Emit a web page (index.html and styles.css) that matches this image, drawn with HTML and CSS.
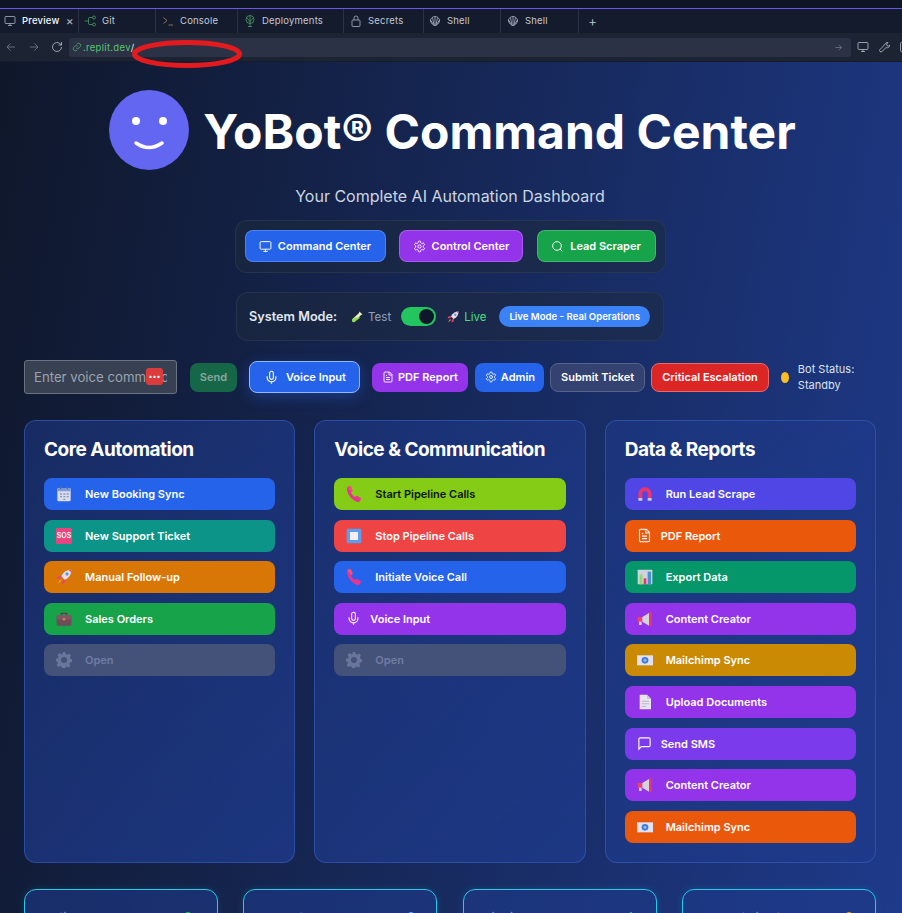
FILE: index.html
```html
<!DOCTYPE html>
<html lang="en">
<head>
    <meta charset="UTF-8">
    <meta name="viewport" content="width=device-width, initial-scale=1.0">
    <title>YoBot Command Center</title>
    <link rel="stylesheet" href="styles.css">
</head>
<body>
    <svg class="defs" width="0" height="0">
        <symbol id="i-monitor" viewBox="0 0 24 24"><rect x="2" y="3" width="20" height="14" rx="2"/><path d="M8 21h8M12 17v4"/></symbol>
        <symbol id="i-gear" viewBox="0 0 24 24"><circle cx="12" cy="12" r="3"/><path d="M12.22 2h-.44a2 2 0 0 0-2 2v.18a2 2 0 0 1-1 1.73l-.43.25a2 2 0 0 1-2 0l-.15-.08a2 2 0 0 0-2.73.73l-.22.38a2 2 0 0 0 .73 2.73l.15.1a2 2 0 0 1 1 1.72v.51a2 2 0 0 1-1 1.74l-.15.09a2 2 0 0 0-.73 2.73l.22.38a2 2 0 0 0 2.73.73l.15-.08a2 2 0 0 1 2 0l.43.25a2 2 0 0 1 1 1.73V20a2 2 0 0 0 2 2h.44a2 2 0 0 0 2-2v-.18a2 2 0 0 1 1-1.73l.43-.25a2 2 0 0 1 2 0l.15.08a2 2 0 0 0 2.73-.73l.22-.39a2 2 0 0 0-.73-2.73l-.15-.08a2 2 0 0 1-1-1.74v-.5a2 2 0 0 1 1-1.74l.15-.09a2 2 0 0 0 .73-2.73l-.22-.38a2 2 0 0 0-2.73-.73l-.15.08a2 2 0 0 1-2 0l-.43-.25a2 2 0 0 1-1-1.73V4a2 2 0 0 0-2-2z"/></symbol>
        <symbol id="i-search" viewBox="0 0 24 24"><circle cx="11" cy="11" r="8"/><path d="M21 21l-4.3-4.3"/></symbol>
        <symbol id="i-mic" viewBox="0 0 24 24"><rect x="9" y="2" width="6" height="13" rx="3"/><path d="M19 10v2a7 7 0 0 1-14 0v-2M12 19v3"/></symbol>
        <symbol id="i-file" viewBox="0 0 24 24"><path d="M15 2H6a2 2 0 0 0-2 2v16a2 2 0 0 0 2 2h12a2 2 0 0 0 2-2V7z"/><path d="M14 2v6h6M16 13H8M16 17H8M10 9H8"/></symbol>
        <symbol id="i-chat" viewBox="0 0 24 24"><path d="M21 15a2 2 0 0 1-2 2H7l-4 4V5a2 2 0 0 1 2-2h14a2 2 0 0 1 2 2z"/></symbol>
        <symbol id="i-shell" viewBox="0 0 24 24"><path d="M12 21c-2 0-4-1-5-2.5C4 16 2.5 13 3 9.5 5 5 8.5 3 12 3s7 2 9 6.5c.5 3.5-1 6.5-4 9-1 1.5-3 2.5-5 2.5zM12 3v18M7 5l3 15.5M17 5l-3 15.5M3 9.5l5.5 9.5M21 9.5L15.5 19"/></symbol>
        <symbol id="e-calendar" viewBox="0 0 24 24"><rect x="2" y="3" width="20" height="20" rx="2" fill="#d9dcec"/><rect x="2" y="3" width="20" height="5" rx="1.5" fill="#7d9ad8"/><rect x="6" y="1" width="2" height="4" fill="#5d6f9c"/><rect x="16" y="1" width="2" height="4" fill="#5d6f9c"/><path d="M6 11h3v2H6zM11 11h3v2h-3zM16 11h3v2h-3zM6 15h3v2H6zM11 15h3v2h-3zM16 15h3v2h-3zM11 19h3v2h-3z" fill="#8d97b8"/></symbol>
        <symbol id="e-rocket" viewBox="0 0 24 24"><path d="M23 1c-7 0-12 3-15 10l5 5c7-3 10-8 10-15z" fill="#eadfe8"/><circle cx="16.5" cy="7.5" r="2.5" fill="#5f9be0"/><path d="M19 1.5c1.5 0 3 0 4-.5 0 1.5 0 3-.5 4z" fill="#e8436e"/><path d="M8 10l-5 1-2 4 6-1zM14 16l-1 5-4 2 1-6z" fill="#e8436e"/><path d="M6 16l2 2-6 5z" fill="#f29a3b"/></symbol>
        <symbol id="e-case" viewBox="0 0 24 24"><path d="M8 6V3.5h8V6" fill="none" stroke="#5b3b45" stroke-width="2"/><rect x="1" y="6" width="22" height="16" rx="2" fill="#6f4b57"/><rect x="1" y="6" width="22" height="7" fill="#7d5763"/><rect x="10" y="11" width="4" height="3" fill="#d8874f"/></symbol>
        <symbol id="e-gear" viewBox="0 0 24 24"><path fill-rule="evenodd" d="M10 0h4l.7 3 2.3 1 2.6-1.6 2.8 2.8L20.800 8l1 2.3 2.2.7v4l-3 .7-1 2.3 1.6 2.6-2.8 2.8-2.6-1.6-2.3 1-.7 2.2h-4l-.7-3-2.3-1-2.6 1.6-2.8-2.8L3.200 17l-1-2.3L0 14v-4l3-.7 1-2.3-1.6-2.6 2.8-2.8L7.800 3.200 10 2.500zM12 7.500a4.500 4.500 0 1 0 0 9 4.500 4.500 0 0 0 0-9z"/></symbol>
        <symbol id="e-phone" viewBox="0 0 24 24"><path d="M2 1l5-1 3 7-2.5 2.5c1 3 3 5.500 6 7l2.500-2 6.500 4-1.500 4.500c-1.500 1-3.500 1-5.500.5C7 20 2 12 1.500 5z" fill="#e8358f"/><path d="M2 1l5-1 3 7-2 2.500z" fill="#f0547a"/></symbol>
        <symbol id="e-stop" viewBox="0 0 24 24"><rect x="1" y="1" width="22" height="22" rx="2" fill="#5c9ded"/><rect x="6" y="6" width="12" height="12" fill="#f6eef9"/></symbol>
        <symbol id="e-magnet" viewBox="0 0 24 24"><path d="M2 18V12a10 10 0 0 1 20 0v6h-6v-6a4 4 0 0 0-8 0v6z" fill="#e8356f"/><path d="M2 18h6v4H2zM16 18h6v4h-6z" fill="#c8c8d4"/></symbol>
        <symbol id="e-chart" viewBox="0 0 24 24"><rect x="1" y="1" width="22" height="22" rx="1" fill="#cfd3dc"/><rect x="4" y="8" width="4" height="15" fill="#8fdc6b"/><rect x="10" y="14" width="4" height="9" fill="#e8356f"/><rect x="16" y="4" width="5" height="19" fill="#4a90d9"/></symbol>
        <symbol id="e-horn" viewBox="0 0 24 24"><path d="M1 9h7v7H1z" fill="#f0435f"/><path d="M8 9l10-6v19L8 16z" fill="#d5d2dc"/><rect x="18" y="1" width="4" height="22" rx="2" fill="#e8356f"/><path d="M3 16h4v5H3z" fill="#d5d2dc"/></symbol>
        <symbol id="e-mail" viewBox="0 0 24 24"><rect x="0" y="5" width="24" height="15" fill="#e3e1f0"/><circle cx="12" cy="12.5" r="5" fill="#3f7fd8"/><circle cx="12" cy="12.5" r="2" fill="#9cc0ee"/></symbol>
        <symbol id="e-page" viewBox="0 0 24 24"><path d="M4 1h11l6 6v16H4z" fill="#e8e4f0"/><path d="M15 1l6 6h-6z" fill="#c7c2d6"/><path d="M7 10h11v1.500H7zM7 14h11v1.500H7zM7 18h7v1.500H7z" fill="#b9b4c8"/></symbol>
    </svg>

    <div class="chrome-top"></div>
    <div class="tabs">
        <div class="tab tab-preview"><svg class="ic"><use href="#i-monitor"/></svg><b>Preview</b><span class="tab-x">×</span></div>
        <div class="tab tab-git">
            <svg class="ic ic-green" viewBox="0 0 24 24"><circle cx="20" cy="5" r="3"/><circle cx="20" cy="19" r="3"/><path d="M1 12h8M9 12V7q0-2 2-2h6M9 12v5q0 2 2 2h6"/></svg>Git</div>
        <div class="tab tab-console">
            <svg class="ic ic-tan" viewBox="0 0 24 24"><path d="M3 5l7 6-7 6M13 20h9"/></svg>Console</div>
        <div class="tab tab-deploy">
            <svg class="ic ic-green" viewBox="0 0 24 24"><circle cx="12" cy="9" r="8"/><path d="M12 1v22M5 5l7 8 7-8M8 23h8"/></svg>Deployments</div>
        <div class="tab tab-secrets">
            <svg class="ic" viewBox="0 0 24 24"><rect x="4" y="10" width="16" height="13" rx="2"/><path d="M8 10V6a4 4 0 0 1 8 0v4"/></svg>Secrets</div>
        <div class="tab tab-shell"><svg class="ic"><use href="#i-shell"/></svg>Shell</div>
        <div class="tab tab-shell"><svg class="ic"><use href="#i-shell"/></svg>Shell</div>
        <div class="tab-add">+</div>
    </div>
    <div class="urlbar">
        <svg class="nav-ic dim" viewBox="0 0 24 24"><path d="M20 12H4M11 5l-7 7 7 7"/></svg>
        <svg class="nav-ic dim" viewBox="0 0 24 24"><path d="M4 12h16M13 5l7 7-7 7"/></svg>
        <svg class="nav-ic" viewBox="0 0 24 24"><path d="M21 12a9 9 0 1 1-3-6.7L21 8M21 2v6h-6"/></svg>
        <div class="url">
            <svg class="link-ic" viewBox="0 0 24 24"><path d="M10 14a5 5 0 0 0 7 0l3-3a5 5 0 0 0-7-7l-1.5 1.5M14 10a5 5 0 0 0-7 0l-3 3a5 5 0 0 0 7 7l1.5-1.5"/></svg>
            <span class="url-text">.replit.dev</span><span class="url-slash">/</span>
            <svg class="url-go" viewBox="0 0 24 24"><path d="M4 12h16M13 5l7 7-7 7"/></svg>
        </div>
        <svg class="nav-ic tool" viewBox="0 0 24 24"><rect x="2" y="3" width="20" height="14" rx="2"/><path d="M8 21h8M12 17v4"/></svg>
        <svg class="nav-ic tool" viewBox="0 0 24 24"><path d="M14.7 6.3a4 4 0 0 1 5.3-3l-3 3 1 3 3 1 3-3a6 6 0 0 1-8 6L8 21a2.5 2.5 0 0 1-4-4l7-7a6 6 0 0 1 3.7-3.7z"/></svg>
        <svg class="nav-ic tool" viewBox="0 0 24 24"><rect x="3" y="3" width="18" height="18" rx="2"/></svg>
    </div>
    <svg class="scribble" viewBox="0 0 110 28"><ellipse cx="55" cy="14" rx="52.5" ry="11.5"/></svg>

    <main class="page">
        <header class="hero">
            <div class="hero-title">
                <div class="face">
                    <i class="eye"></i><i class="eye"></i>
                    <svg class="smile" viewBox="0 0 80 80"><path d="M27 53Q40 62 53 53"/></svg>
                </div>
                <h1>YoBot® Command Center</h1>
            </div>
            <p class="subtitle">Your Complete AI Automation Dashboard</p>
            <nav class="pill-box nav-box">
                <a class="nav-btn nav-cmd blue"><svg class="ic-s"><use href="#i-monitor"/></svg>Command Center</a>
                <a class="nav-btn nav-ctl purple"><svg class="ic-s"><use href="#i-gear"/></svg>Control Center</a>
                <a class="nav-btn nav-lead green"><svg class="ic-s"><use href="#i-search"/></svg>Lead Scraper</a>
            </nav>
            <div class="pill-box mode-box">
                <strong>System Mode:</strong>
                <span class="mode-test">
                    <svg class="em" viewBox="0 0 24 24"><path d="M17 1l6 6-3 1L8 21a3.5 3.5 0 0 1-5-5L16 4z" fill="#e8f0c0"/><path d="M10 13h9l-11 8a3.5 3.5 0 0 1-5-5z" fill="#8fdc4b"/></svg>Test</span>
                <span class="toggle"><i></i></span>
                <span class="mode-live"><svg class="em"><use href="#e-rocket"/></svg>Live</span>
                <span class="mode-pill">Live Mode - Real Operations</span>
            </div>
        </header>

        <section class="toolbar">
            <div class="voice-field">
                <span class="placeholder">Enter voice command...</span>
                <span class="dots">•••</span>
            </div>
            <button class="btn send">Send</button>
            <button class="btn voice"><svg class="ic-m"><use href="#i-mic"/></svg>Voice Input</button>
            <button class="btn purple pdf"><svg class="ic-s"><use href="#i-file"/></svg>PDF Report</button>
            <button class="btn blue admin"><svg class="ic-s"><use href="#i-gear"/></svg>Admin</button>
            <button class="btn ticket">Submit Ticket</button>
            <button class="btn critical">Critical Escalation</button>
            <div class="bot-status"><i class="dot"></i><span>Bot Status:<br>Standby</span></div>
        </section>

        <section class="columns">
            <div class="card">
                <h2>Core Automation</h2>
                <a class="act blue"><svg class="em"><use href="#e-calendar"/></svg>New Booking Sync</a>
                <a class="act teal"><span class="sos">SOS</span>New Support Ticket</a>
                <a class="act amber"><svg class="em"><use href="#e-rocket"/></svg>Manual Follow-up</a>
                <a class="act green"><svg class="em"><use href="#e-case"/></svg>Sales Orders</a>
                <a class="act off"><svg class="em"><use href="#e-gear"/></svg>Open</a>
            </div>
            <div class="card">
                <h2>Voice &amp; Communication</h2>
                <a class="act lime"><svg class="em"><use href="#e-phone"/></svg>Start Pipeline Calls</a>
                <a class="act red"><svg class="em"><use href="#e-stop"/></svg>Stop Pipeline Calls</a>
                <a class="act blue"><svg class="em"><use href="#e-phone"/></svg>Initiate Voice Call</a>
                <a class="act purple line"><svg class="ic-a"><use href="#i-mic"/></svg>Voice Input</a>
                <a class="act off"><svg class="em"><use href="#e-gear"/></svg>Open</a>
            </div>
            <div class="card">
                <h2>Data &amp; Reports</h2>
                <a class="act indigo"><svg class="em"><use href="#e-magnet"/></svg>Run Lead Scrape</a>
                <a class="act orange line"><svg class="ic-a"><use href="#i-file"/></svg>PDF Report</a>
                <a class="act emerald"><svg class="em"><use href="#e-chart"/></svg>Export Data</a>
                <a class="act purple"><svg class="em"><use href="#e-horn"/></svg>Content Creator</a>
                <a class="act gold"><svg class="em"><use href="#e-mail"/></svg>Mailchimp Sync</a>
                <a class="act purple"><svg class="em"><use href="#e-page"/></svg>Upload Documents</a>
                <a class="act violet line"><svg class="ic-a"><use href="#i-chat"/></svg>Send SMS</a>
                <a class="act purple"><svg class="em"><use href="#e-horn"/></svg>Content Creator</a>
                <a class="act orange"><svg class="em"><use href="#e-mail"/></svg>Mailchimp Sync</a>
            </div>
        </section>

        <section class="stats">
            <div class="stat"><span>Active Calls</span><i class="stat-ic s-green"></i></div>
            <div class="stat"><span>AI Chats</span><i class="stat-ic s-blue"></i></div>
            <div class="stat"><span>Pipeline Value</span><i class="stat-ic s-teal"></i></div>
            <div class="stat"><span>Support Tickets</span><i class="stat-ic s-orange"></i></div>
        </section>
    </main>
</body>
</html>
```

FILE: styles.css
```css
* {
    box-sizing: border-box;
}
html, body {
    margin: 0;
    height: 913px;
    overflow: hidden;
}
body {
    position: relative;
    display: flex;
    flex-direction: column;
    font-family: Inter, "Liberation Sans", sans-serif;
    background: #0f172a;
    color: white;
}
.defs {
    position: absolute;
}

/* browser chrome */
.chrome-top {
    height: 9px;
    background: #0e1525;
    border-bottom: 1px solid #6d55e8;
}
.tabs {
    display: flex;
    height: 24px;
    background: #141b2c;
    color: #c2c8d4;
    font-size: 9.5px;
    letter-spacing: .2px;
}
.tab {
    display: flex;
    align-items: center;
    gap: 6px;
    padding-left: 4px;
    padding-bottom: 1px;
    border-right: 1px solid #2b3245;
}
.tab b {
    font-weight: 500;
    color: #f5f9fc;
}
.tab-x {
    margin-left: auto;
    margin-right: 4px;
    font-size: 12px;
    color: #b0b6c4;
}
.tab-preview { width: 79px; }
.tab-git { width: 77px; padding-left: 5px; }
.tab-console { width: 82px; padding-left: 6px; }
.tab-deploy { width: 106px; padding-left: 6px; }
.tab-secrets { width: 80px; padding-left: 6px; }
.tab-shell { width: 77px; padding-left: 5px; }
.tab-shell + .tab-shell { width: 78px; padding-left: 6px; }
.tab-add {
    padding-left: 9px;
    font-size: 14px;
    line-height: 23px;
    font-weight: 300;
}
.ic {
    width: 12px;
    height: 12px;
    fill: none;
    stroke: #b4bccb;
    stroke-width: 1.5;
    flex: none;
}
.ic-green { stroke: #4fa36b; }
.ic-tan { stroke: #a89266; }
.urlbar {
    display: flex;
    align-items: center;
    height: 29px;
    padding-left: 5px;
    background: #1c2333;
    border-bottom: 1px solid #141b2c;
}
.nav-ic {
    width: 12px;
    height: 12px;
    margin-right: 11px;
    fill: none;
    stroke: #c2c8d4;
    stroke-width: 1.5;
    flex: none;
}
.nav-ic.dim { stroke: #7b8395; }
.nav-ic.tool { margin-left: 6px; margin-right: 3px; }
.url {
    display: flex;
    align-items: center;
    flex: none;
    width: 782px;
    height: 19px;
    margin-left: -5px;
    padding: 0 3px;
    background: #2b3245;
    border-radius: 3px;
    font-size: 9.5px;
    letter-spacing: .3px;
}
.link-ic {
    width: 10px;
    height: 10px;
    margin-right: 1px;
    fill: none;
    stroke: #4fa36b;
    stroke-width: 2;
}
.url-text { color: #58c470; }
.url-slash { color: #e8e8ee; }
.url-go {
    width: 9px;
    height: 9px;
    margin-left: auto;
    margin-right: 5px;
    fill: none;
    stroke: #8b92a3;
    stroke-width: 1.5;
}
.scribble {
    position: absolute;
    left: 132px;
    top: 40px;
    width: 110px;
    height: 28px;
    fill: none;
    stroke: #e31b1f;
    stroke-width: 5;
}

/* page */
.page {
    flex: 1;
    overflow: hidden;
    padding: 28px 26px 0 24px;
    background: linear-gradient(100deg, #0f172a 0%, #1e3a8a 100%);
}
.hero {
    display: flex;
    flex-direction: column;
    align-items: center;
}
.hero-title {
    display: flex;
    align-items: flex-start;
    gap: 14px;
    height: 80px;
    margin-left: 5px;
}
h1 {
    margin: 0;
    font-size: 48px;
    line-height: 84px;
    font-weight: 700;
    white-space: nowrap;
}
.face {
    position: relative;
    flex: none;
    width: 80px;
    height: 80px;
    border-radius: 50%;
    background: #6366f1;
}
.eye {
    position: absolute;
    top: 27px;
    left: 22.5px;
    width: 8px;
    height: 8px;
    border-radius: 50%;
    background: white;
}
.eye + .eye {
    left: 49.5px;
}
.smile {
    position: absolute;
    left: 0;
    top: 0;
    width: 80px;
    height: 80px;
    fill: none;
    stroke: white;
    stroke-width: 3.5;
    stroke-linecap: round;
}
.subtitle {
    margin: 14px 0 0;
    font-size: 16px;
    line-height: 24px;
    color: #cbd5e1;
}
.pill-box {
    display: flex;
    align-items: center;
    background: rgba(30, 41, 59, .5);
    border: 1px solid rgba(51, 65, 85, .5);
    border-radius: 12px;
}
.nav-box {
    align-items: flex-start;
    gap: 13.5px;
    height: 53px;
    margin-top: 12px;
    padding: 9px;
}
.nav-btn {
    display: flex;
    align-items: center;
    justify-content: center;
    gap: 6px;
    height: 32px;
    border-radius: 8px;
    font-size: 11px;
    font-weight: 600;
    border: 1px solid rgba(255, 255, 255, .2);
}
.nav-cmd { width: 141px; }
.nav-ctl { width: 124px; }
.nav-lead { width: 119px; }
.mode-box {
    height: 49px;
    margin-top: 19px;
    padding: 0 13px 0 12px;
    font-size: 11.5px;
    color: #94a3b8;
}
.mode-box strong {
    font-size: 12.7px;
    font-weight: 600;
    color: #e2e8f0;
    margin-right: 14px;
}
.mode-test, .mode-live {
    display: flex;
    align-items: center;
    gap: 5px;
}
.mode-live {
    color: #4ade80;
    margin-right: 13px;
}
.mode-test .em, .mode-live .em {
    width: 12px;
    height: 12px;
}
.toggle {
    position: relative;
    width: 35px;
    height: 19px;
    margin: 0 11px 0 10px;
    border-radius: 10px;
    background: #22c55e;
}
.toggle i {
    position: absolute;
    right: 2px;
    top: 2px;
    width: 15px;
    height: 15px;
    border-radius: 50%;
    background: #0f172a;
}
.mode-pill {
    padding: 0 10px;
    height: 21px;
    line-height: 21px;
    border-radius: 11px;
    background: #3b82f6;
    color: white;
    font-size: 9.6px;
    font-weight: 600;
}

/* toolbar */
.toolbar {
    display: flex;
    align-items: center;
    margin-top: 19px;
    height: 34px;
}
.voice-field {
    position: relative;
    width: 153px;
    height: 34px;
    padding: 0 9px;
    overflow: hidden;
    background: #374151;
    border: 1px solid #6b7280;
    border-radius: 3px;
    font-size: 13.2px;
    line-height: 32px;
    color: #9ca3af;
    white-space: nowrap;
}
.placeholder {
    display: block;
    width: 133px;
    overflow: hidden;
}
.dots {
    position: absolute;
    right: 13px;
    top: 7px;
    width: 17px;
    height: 17px;
    border-radius: 3px;
    background: #dc3b3b;
    color: white;
    font-size: 7px;
    line-height: 17px;
    text-align: center;
}
.btn {
    display: flex;
    align-items: center;
    gap: 4px;
    height: 29px;
    margin: 0;
    padding: 0 10px;
    border: none;
    border-radius: 8px;
    font-family: inherit;
    font-size: 11px;
    font-weight: 600;
    color: white;
    white-space: nowrap;
}
.btn .ic-s {
    width: 12px;
    height: 12px;
}
.send {
    width: 47px;
    margin-left: 13px;
    justify-content: center;
    padding: 0;
    background: #166648;
    color: #8aa69b;
}
.voice {
    width: 111px;
    height: 32px;
    margin-left: 12px;
    gap: 7px;
    padding-left: 14px;
    background: #2563eb;
    border: 1px solid #93b7f5;
    box-shadow: 0 4px 14px rgba(37, 99, 235, .35);
}
.pdf {
    margin-left: 12px;
}
.admin {
    margin-left: 7px;
    padding-right: 9px;
}
.ticket {
    margin-left: 6px;
    background: #334270;
    border: 1px solid #55628a;
}
.critical {
    margin-left: 6px;
    background: #dc2626;
    border: 1px solid #e76a6a;
}
.bot-status {
    display: flex;
    align-items: center;
    gap: 9px;
    margin-left: 12px;
    font-size: 11px;
    line-height: 16px;
    color: #dbe4f0;
    white-space: nowrap;
}
.dot {
    width: 8px;
    height: 11px;
    border-radius: 50%;
    background: #fbbf24;
}
.ic-s, .ic-m, .ic-a {
    width: 13px;
    height: 13px;
    fill: none;
    stroke: white;
    stroke-width: 1.8;
    flex: none;
}
.ic-m {
    width: 15px;
    height: 15px;
}
.ic-a {
    width: 15px;
    height: 15px;
}

/* cards */
.columns {
    display: grid;
    grid-template-columns: repeat(3, 1fr);
    gap: 19px;
    margin-top: 26px;
}
.card {
    display: flex;
    flex-direction: column;
    gap: 9.63px;
    height: 443px;
    padding: 15px 19px;
    background: linear-gradient(135deg, rgba(30, 58, 138, .55), rgba(30, 58, 138, .8));
    border: 1px solid rgba(59, 100, 200, .55);
    border-radius: 12px;
}
h2 {
    margin: 0 0 4.37px;
    font-size: 19px;
    line-height: 28px;
    font-weight: 700;
    letter-spacing: -.5px;
}
.act {
    display: flex;
    align-items: center;
    gap: 13px;
    height: 32px;
    padding-left: 12px;
    border-radius: 8px;
    font-size: 11px;
    font-weight: 600;
    flex: none;
}
.act.line {
    gap: 9px;
}
.em {
    width: 16px;
    height: 16px;
    flex: none;
}
.sos {
    width: 16px;
    height: 16px;
    background: #e8447e;
    border-radius: 1px;
    font-size: 7px;
    line-height: 16px;
    text-align: center;
    flex: none;
}
.off {
    background: #44527a;
    color: #6f7ca3;
}
.off .em {
    fill: #6a7599;
}
.blue { background: #2563eb; }
.purple { background: #9333ea; }
.green { background: #16a34a; }
.teal { background: #0d9488; }
.amber { background: #d97706; }
.lime { background: #84cc16; color: #0b1206; }
.red { background: #ef4444; }
.indigo { background: #4f46e5; }
.orange { background: #ea580c; }
.emerald { background: #059669; }
.gold { background: #ca8a04; }
.violet { background: #7c3aed; }

/* bottom stat row, only the top edge is in view */
.stats {
    display: grid;
    grid-template-columns: repeat(4, 194px);
    justify-content: space-between;
    margin-top: 26px;
}
.stat {
    display: flex;
    justify-content: space-between;
    height: 120px;
    padding: 20px 20px 0 21px;
    background: rgba(30, 58, 138, .6);
    border: 1px solid #25cbe8;
    border-radius: 12px;
    box-shadow: 0 0 8px rgba(34, 211, 238, .12);
    font-size: 11px;
    color: #94a3b8;
}
.stat-ic {
    width: 6px;
    height: 14px;
    margin: 2px 6px 0 0;
    border-radius: 3px;
}
.s-green { background: #22c55e; }
.s-blue { margin-right: 2px; background: #60a5fa; }
.s-teal { width: 2px; margin-right: 4px; background: #34d399; }
.s-orange { margin-right: 3px; background: #f59e0b; }
```
